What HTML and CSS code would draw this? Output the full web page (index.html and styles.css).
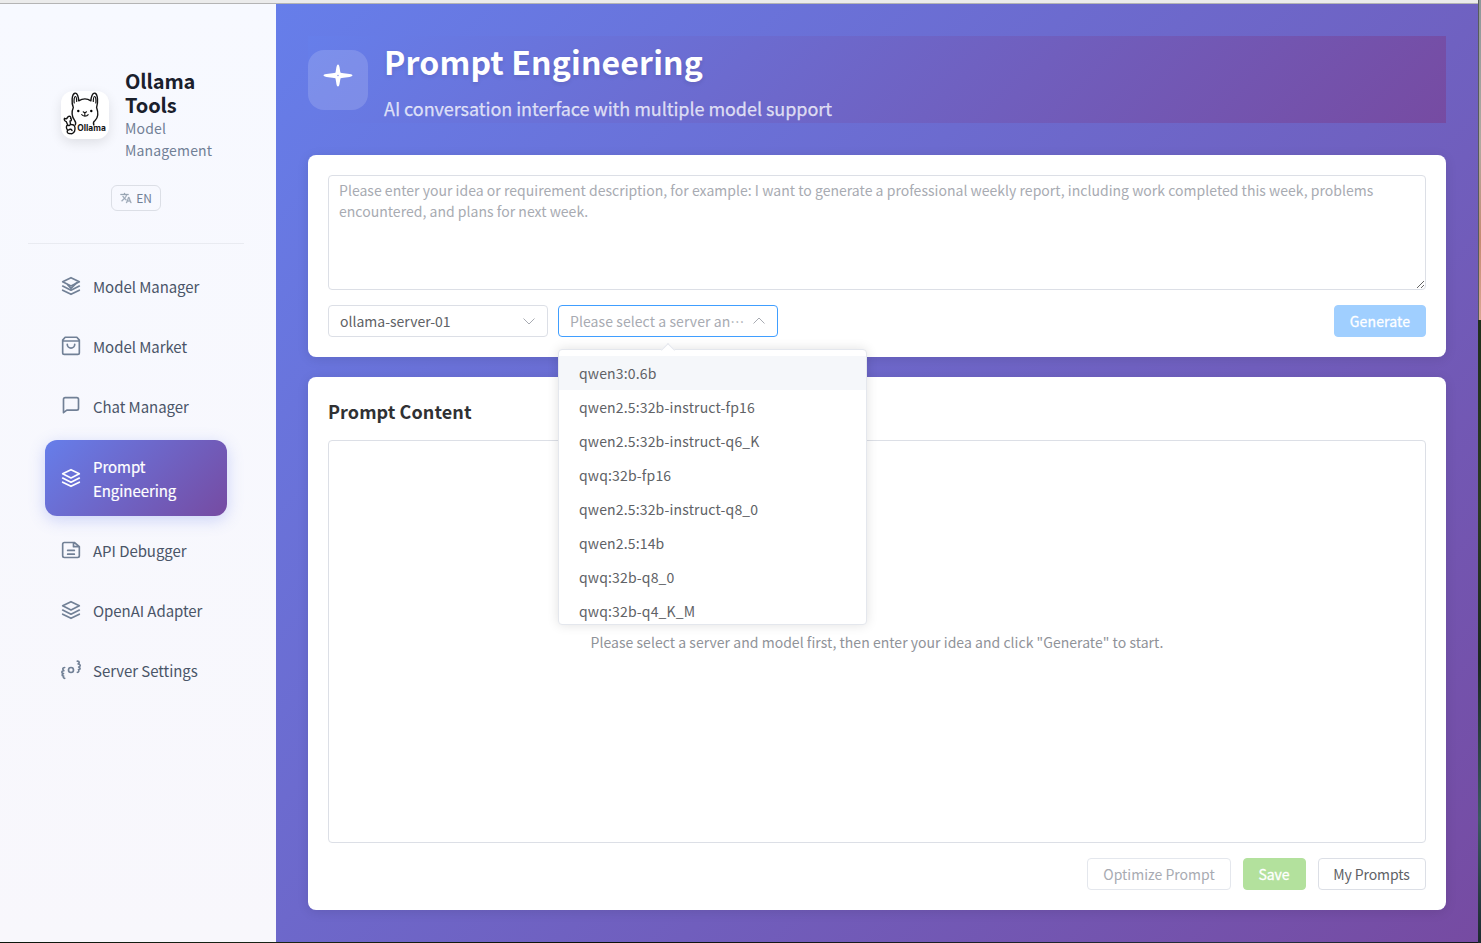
FILE: index.html
```html
<!DOCTYPE html>
<html lang="en">
<head>
<meta charset="utf-8">
<title>Ollama Tools</title>
<link rel="stylesheet" href="styles.css">
</head>
<body>
<svg class="sprite" aria-hidden="true">
  <symbol id="layers" viewBox="0 0 24 24">
    <path d="M12 2 2 7l10 5 10-5-10-5z"/>
    <path d="m2 17 10 5 10-5"/>
    <path d="m2 12 10 5 10-5"/>
  </symbol>
</svg>
<div class="window">
  <aside class="sidebar">
    <header class="brand">
      <div class="brand-row">
        <svg class="logo" viewBox="0 0 48 48">
          <g fill="none" stroke="#151515" stroke-width="1.4" stroke-linecap="round" stroke-linejoin="round">
            <path d="M14.200 34c1-1.800.3-3.500-.7-4.800-2.700-3.700-3-8.500-1.200-12.700-2-5-1.600-13.700 1.700-14.300 2.300-.4 3.400 3.300 3.700 7.600 4.200-2.600 8.300-2.600 12.200 0 .3-4.300 1.600-8 4-7.600 3 .6 3.300 9.300 1.700 14.300 2 5.500 1.200 10.300-1.500 13-1.700 1.200-2.200 2.300-1.300 4.500"/>
            <path d="M13.200 12c-.5-3 .2-6.500 1-6.500s1.500 2.500 1.500 5M34.800 12c.5-3-.2-6.500-1-6.500s-1.500 2.500-1.500 5" stroke-width="1.200"/>
            <path d="m22.200 20.800 1.600 1.200 1.700-1.200M23.800 22v2M20.700 23.600c1.100 2 5.300 2 6.500 0" stroke-width="1.100"/>
            <path d="M3.500 27.300c1 .7 2.500.7 2.900-.8 1.600-2.400 4.200-.7 3.200.8 1.500.8.900 2.700-.6 2.700l.5 3.500c3.600-.3 4.700 1.700 4.500 4.500 0 3.800-3.400 5.500-5 4.500-2.800.7-3.300-2-2.300-3.500-2-1.500-1.500-4.500 0-5l-1.400-3.300c-1.700-.7-2.500-2-1.800-3.400zM7.500 39c1.500-1.200 3-.8 3.500.5M6.700 34c1 1 3 0 3-1"/>
          </g>
          <circle cx="17.300" cy="20" r="1.200"/><circle cx="30.300" cy="20" r="1.200"/>
          <text class="logo-word" x="16.300" y="40.300" textLength="28.500" lengthAdjust="spacingAndGlyphs">Ollama</text>
        </svg>
        <div class="brand-text">
          <h1>Ollama Tools</h1>
          <p>Model Management</p>
        </div>
      </div>
      <button class="lang">
        <svg viewBox="0 0 24 24"><path d="m12.870 15.070-2.540-2.510.030-.030A17.520 17.520 0 0 0 14.070 6H17V4h-7V2H8v2H1v2h11.170C11.500 7.920 10.440 9.750 9 11.350 8.070 10.320 7.300 9.190 6.690 8h-2c.73 1.630 1.730 3.170 2.980 4.560l-5.090 5.020L4 19l5-5 3.110 3.110.76-2.040zM18.500 10h-2L12 22h2l1.120-3h4.750L21 22h2l-4.500-12zm-2.620 7 1.620-4.330L19.120 17h-3.240z"/></svg>
        <span>EN</span>
      </button>
    </header>
    <nav class="menu">
      <a class="item"><svg class="ico" viewBox="0 0 24 24"><use href="#layers"/><path d="m8 10.500 4 4.500 7-7"/></svg><span>Model Manager</span></a>
      <a class="item"><svg class="ico" viewBox="0 0 24 24"><path d="M5 1.500h14L22 5v15a2 2 0 0 1-2 2H4a2 2 0 0 1-2-2V5l3-3.500zM2 6h20M16.500 10a4.500 4.500 0 0 1-9 0"/></svg><span>Model Market</span></a>
      <a class="item"><svg class="ico" viewBox="0 0 24 24"><path d="M21 15a2 2 0 0 1-2 2H7l-4 3V4a2 2 0 0 1 2-2h14a2 2 0 0 1 2 2z"/></svg><span>Chat Manager</span></a>
      <a class="item active"><svg class="ico" viewBox="0 0 24 24"><use href="#layers"/></svg><span>Prompt Engineering</span></a>
      <a class="item"><svg class="ico" viewBox="0 0 24 24"><path d="M15 3H4a2 2 0 0 0-2 2v14a2 2 0 0 0 2 2h16a2 2 0 0 0 2-2V8l-6-5h-1zM15 3v5h7M16 12.500H8M16 17H8"/></svg><span>API Debugger</span></a>
      <a class="item"><svg class="ico" viewBox="0 0 24 24"><use href="#layers"/></svg><span>OpenAI Adapter</span></a>
      <a class="item"><svg class="ico" viewBox="0 0 24 24"><circle cx="12" cy="12" r="3"/><path d="M4.400 9C1.600 9 1.600 11.500 3.400 12.800.2 13.200.2 15.800 3 16.300.6 17.500 1 19.200 3.200 19.300c-.9 1.500-.1 2.700 1.300 2.700M19.600 1.400c2.800 0 2.800 2 1 3.400 3.200.4 3.200 3 .6 3.600 2.400 1.200 2.200 3-.2 3.200 1 1.600.2 3.200-1.400 3.200"/></svg><span>Server Settings</span></a>
    </nav>
  </aside>
  <main class="main">
    <header class="hero">
      <div class="hero-icon"><svg viewBox="0 0 32 32"><path fill-rule="evenodd" d="M16 0.500c1.800 0 1.700 5.500 2.600 8.300 2.900.9 11.900.8 11.900 2.700s-9 1.800-11.900 2.700c-.9 2.800-.8 8.300-2.600 8.300s-1.700-5.500-2.600-8.300C10.500 13.300 1.500 13.400 1.500 11.500s9-1.800 11.900-2.700C14.300 6 14.200.5 16 .5zm0 10.300a.7.7 0 1 0 0 1.400.7.7 0 1 0 0-1.400z"/></svg></div>
      <div class="hero-text">
        <h2>Prompt Engineering</h2>
        <p>AI conversation interface with multiple model support</p>
      </div>
    </header>
    <section class="card">
      <textarea placeholder="Please enter your idea or requirement description, for example: I want to generate a professional weekly report, including work completed this week, problems encountered, and plans for next week."></textarea>
      <div class="controls">
        <div class="select"><span>ollama-server-01</span><svg viewBox="0 0 14 14"><path d="m1.500 4.500 5.500 5.500 5.500-5.500"/></svg></div>
        <div class="select open"><span>Please select a server an<i lang="zh-CN">⋯</i></span><svg viewBox="0 0 14 14"><path d="m1.500 9.500 5.500-5.500 5.500 5.500"/></svg>
          <div class="dropdown">
            <ul>
              <li class="hover">qwen3:0.6b</li>
              <li>qwen2.5:32b-instruct-fp16</li>
              <li>qwen2.5:32b-instruct-q6_K</li>
              <li>qwq:32b-fp16</li>
              <li>qwen2.5:32b-instruct-q8_0</li>
              <li>qwen2.5:14b</li>
              <li>qwq:32b-q8_0</li>
              <li>qwq:32b-q4_K_M</li>
            </ul>
          </div>
        </div>
        <button class="btn primary">Generate</button>
      </div>
    </section>
    <section class="card content">
      <h3>Prompt Content</h3>
      <div class="result">Please select a server and model first, then enter your idea and click "Generate" to start.</div>
      <div class="actions">
        <button class="btn disabled">Optimize Prompt</button>
        <button class="btn success">Save</button>
        <button class="btn prompts">My Prompts</button>
      </div>
    </section>
  </main>
</div>
</body>
</html>
```

FILE: styles.css
```css
* { box-sizing: border-box; }
h1, h2, h3, p, ul { margin: 0; padding: 0; }
body {
  margin: 0;
  height: 943px;
  overflow: hidden;
  padding: 0 3px 1px 0;
  font-family: "Noto Sans CJK SC", sans-serif;
  background:
    linear-gradient(90deg, #565c5c, #565c5c 1px, transparent 1px) 1478px 0 / 3px 320px no-repeat,
    linear-gradient(#8e979a, #b0a9a0 45%, #c58b72 75%, #d9a793) 1478px 0 / 3px 320px no-repeat,
    linear-gradient(#20301c, #2c3a22 30%, #1b2820 55%, #3c5a60 80%, #1d2a30) 1478px 320px / 3px 623px no-repeat,
    linear-gradient(90deg, #0c150c, #1a2416 20%, #0a100a 40%, #191b20 60%, #263040 85%, #15171d);
}
button { font-family: inherit; }
.sprite { position: absolute; width: 0; height: 0; }
.window {
  display: flex;
  height: 942px;
  border-top: 3px solid #ebebeb;
  background: linear-gradient(135deg, #667eea, #764ba2);
  box-shadow: inset 0 1px #b4b4b4;
  padding-top: 1px;
}
.window .sidebar { width: 276px; flex: none; background: linear-gradient(180deg, #f7f9ff, #f8f7fc); }
.brand {
  height: 240px;
  margin: 0 32px 0 28px;
  padding: 65px 31px 0 33px;
  border-bottom: 1px solid #e9ebf1;
  display: flex;
  flex-direction: column;
  align-items: center;
}
.brand-row { display: flex; align-items: center; gap: 16px; width: 100%; }
.logo { width: 48px; height: 48px; flex: none; border-radius: 12px; background: #fff; box-shadow: 0 4px 12px rgba(0,0,0,.1); }
.logo-word { font: 700 8.500px Inter, sans-serif; fill: #151515; }
.brand-text { width: 100px; flex: none; }
.brand h1 { font-size: 20px; line-height: 24px; color: #1a202c; font-weight: 700; letter-spacing: -.1px; }
.brand p { font-size: 14px; line-height: 22px; color: #718096; letter-spacing: .15px; }
.lang {
  margin: 24px 2px 0 0;
  width: 50px; height: 26px;
  border: 1px solid #dcdfe6; border-radius: 6px;
  background: transparent; color: #718096;
  display: flex; align-items: center; justify-content: center; gap: 4px;
  padding: 0 0 1px; font-size: 12px;
}
.lang svg { width: 12px; height: 12px; fill: #9aa5b5; stroke: #9aa5b5; stroke-width: .6; }
.menu { margin: 16px 49px 0 45px; }
.item {
  display: flex; align-items: center; gap: 12px;
  min-height: 52px; margin-bottom: 8px; padding: 15px 16px 13px;
  border-radius: 12px; color: #4a5568; font-size: 15px; line-height: 24px; letter-spacing: -.06px;
}
.ico { width: 20px; height: 20px; margin-top: -2px; flex: none; fill: none; stroke: #718096; stroke-width: 2; stroke-linecap: round; stroke-linejoin: round; overflow: visible; }
.item.active { color: #fff; background: linear-gradient(135deg, #667eea, #764ba2); box-shadow: 0 4px 16px rgba(102,126,234,.3); -webkit-text-stroke: .2px; }
.active .ico { stroke: #fff; }
.main { flex: 1; padding: 32px; display: flex; flex-direction: column; background: linear-gradient(135deg, #667eea, #764ba2); }
.hero {
  height: 87px; margin-bottom: 32px; display: flex; align-items: center; gap: 16px;
  background: linear-gradient(135deg, #667eea, #764ba2);
}
.hero-icon { width: 60px; height: 60px; border-radius: 16px; background: rgba(255,255,255,.15); padding: 14px; }
.hero-icon svg { width: 32px; height: 32px; display: block; fill: #fff; }
.hero-text { padding-bottom: 3px; }
.hero h2 { color: #fff; font-size: 32px; line-height: 54px; font-weight: 700; letter-spacing: .15px; text-shadow: 0 2px 4px rgba(0,0,0,.1); }
.hero p { color: rgba(255,255,255,.75); font-size: 18px; line-height: 27px; margin-top: 7px; letter-spacing: -.055px; -webkit-text-stroke: .25px; }
.card { background: #fff; border-radius: 8px; padding: 20px; box-shadow: 0 2px 12px rgba(0,0,0,.1); height: 202px; }
textarea {
  display: block; width: 100%; height: 115px; resize: vertical; outline: 0;
  border: 1px solid #dcdfe6; border-radius: 4px; padding: 4px 10px;
  font: 14px/21px "Noto Sans CJK SC", sans-serif; letter-spacing: .025px; background: #fff;
}
textarea::placeholder { color: #a8abb2; }
.controls { display: flex; gap: 10px; margin-top: 15px; }
.select {
  position: relative; width: 220px; height: 32px; padding: 0 11px;
  border: 1px solid #dcdfe6; border-radius: 4px;
  display: flex; align-items: center; justify-content: space-between;
  font-size: 14px; color: #606266; white-space: nowrap;
}
.select > svg { width: 14px; height: 14px; flex: none; fill: none; stroke: #a8abb2; stroke-width: 1; }
.select.open { border-color: #409eff; }
.select.open > span { color: #a8abb2; letter-spacing: .08px; }
.select i { font-style: normal; }
.dropdown {
  position: absolute; z-index: 2; left: -1px; top: 43px; width: 309px; height: 276px;
  background: #fff; border: 1px solid #e4e7ed; border-radius: 4px;
  box-shadow: 0 0 12px rgba(0,0,0,.12); color: #606266; letter-spacing: .16px;
}
.dropdown::before {
  content: ""; position: absolute; left: 104px; top: -5px; width: 9px; height: 9px;
  background: #fff; border: solid #e4e7ed; border-width: 1px 0 0 1px; transform: rotate(45deg);
}
.dropdown ul { list-style: none; padding-top: 6px; height: 274px; overflow: hidden; position: relative; }
.dropdown li { height: 34px; line-height: 34px; padding-left: 20px; }
.dropdown .hover { background: #f5f7fa; }
.btn { height: 32px; padding: 0; border: 1px solid #dcdfe6; border-radius: 4px; background: #fff; color: #606266; font-size: 14px; white-space: nowrap; }
.primary { width: 92px; margin-left: auto; background: #a0cfff; border-color: #a0cfff; color: #fff; letter-spacing: .15px; -webkit-text-stroke: .3px; }
.success { width: 63px; padding-right: 1px; background: #b3e19d; border-color: #b3e19d; color: #fff; -webkit-text-stroke: .3px; }
.disabled { width: 144px; color: #a8abb2; border-color: #e4e7ed; }
.prompts { width: 108px; padding-right: 1px; letter-spacing: -.08px; }
.content { margin-top: 20px; height: 533px; }
.content h3 { font-size: 18px; line-height: 28px; height: 43px; color: #303133; font-weight: 700; letter-spacing: .08px; }
.result {
  height: 403px; border: 1px solid #dcdfe6; border-radius: 4px;
  display: flex; align-items: center; justify-content: center; color: #909399; font-size: 14px; letter-spacing: .035px;
}
.actions { display: flex; justify-content: flex-end; gap: 12px; margin-top: 15px; }
```
